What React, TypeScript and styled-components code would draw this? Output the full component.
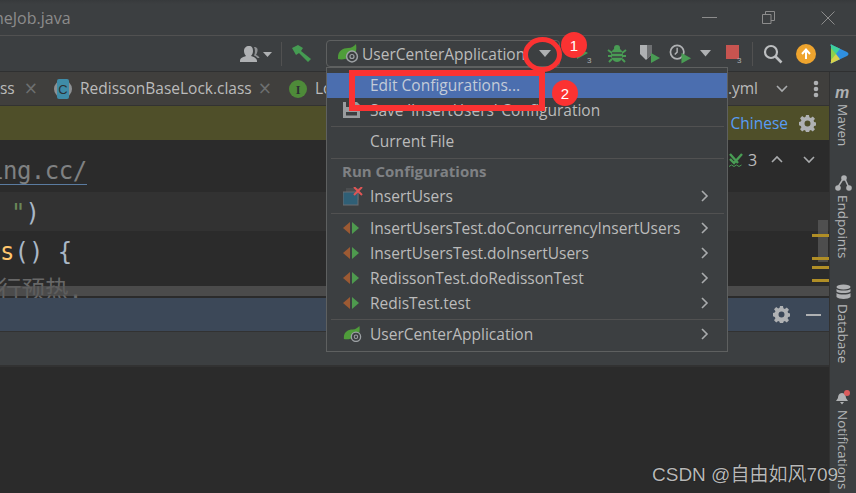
import React from 'react';
import styled, { createGlobalStyle } from 'styled-components';

const Global = createGlobalStyle`
  html, body { margin: 0; padding: 0; background: #2b2b2b; }
  body { font-family: "Open Sans", "Noto Sans CJK SC", sans-serif; }
`;

const Screen = styled.div`
  position: relative; width: 856px; height: 493px; overflow: hidden;
  display: flex; flex-direction: column; background: #3c3f41; color: #bbbbbb;
  font-size: 15.5px;
`;
const TitleBar = styled.header`
  position: relative; flex: 0 0 35px; display: flex; align-items: center;
  border-bottom: 1px solid #515151; box-sizing: content-box;
  background: linear-gradient(#34363899 0, #3c3f41 4px);
`;
const TitleText = styled.span`
  margin-left: -6px; color: #8c8c8c; font-size: 16px; flex: 1;
`;
const WindowButton = styled.svg`
  display: block; margin-right: ${p => p.$mr}px; flex: none;
`;
const Toolbar = styled.div`
  flex: 0 0 35px; display: flex; align-items: center; padding-left: 240px;
  border-bottom: 1px solid #2f3031; box-sizing: content-box;
`;
const Slot = styled.div`
  flex: none; display: flex; align-items: center; justify-content: center;
  width: ${p => p.$w}px; margin-left: ${p => p.$ml || 0}px;
`;
const ToolSep = styled.div`
  flex: none; width: 1px; height: 24px; background: #515151;
  margin-left: ${p => p.$ml}px;
`;
const Combo = styled.div`
  flex: none; box-sizing: border-box; width: 234px; height: 27px; margin-left: 14px;
  border: 1px solid #5e6060; border-radius: 4px; display: flex; align-items: center;
  padding-left: 10px; gap: 3px; font-size: 15.5px; white-space: nowrap;
`;
const ComboCaret = styled.span`
  margin-left: 11px; width: 0; height: 0;
  border-left: 6px solid transparent; border-right: 6px solid transparent; border-top: 7px solid #afb1b3;
`;
const Workspace = styled.div`flex: 1; display: flex; min-height: 0;`;
const MainColumn = styled.div`flex: 1; min-width: 0; display: flex; flex-direction: column;`;
const Tabs = styled.div`
  flex: 0 0 33px; display: flex; align-items: center; background: #403f3d;
  border-bottom: 1px solid #323232; box-sizing: content-box; white-space: nowrap; overflow: hidden;
`;
const Tab = styled.div`
  flex: none; display: flex; align-items: center; margin-left: ${p => p.$ml}px;
`;
const TabName = styled.span`margin-left: ${p => p.$ml || 0}px; font-size: 15.5px; padding-bottom: 1px;`;
const TabClose = styled.span`
  margin-left: ${p => p.$ml}px; color: #6d6f70; font-size: 17px; line-height: 1; font-family: "DejaVu Sans", sans-serif;
`;
const TabEnd = styled.div`
  margin-left: auto; display: flex; align-items: center; padding-right: 10px;
`;
const TabEndGap = styled.span`flex: none; width: ${p => p.$w}px;`;
const Banner = styled.div`
  flex: 0 0 34px; background: #4f4f29; display: flex; align-items: center; justify-content: flex-end;
  padding-right: 13px; gap: 11px; color: #589df6; font-size: 15.5px;
`;
const Editor = styled.section`
  position: relative; flex: 0 0 158px; background: #2b2b2b; overflow: hidden;
  font-family: "DejaVu Sans Mono", "Noto Sans CJK SC", monospace; font-size: 24px; color: #a9b7c6;
`;
const CodeRow = styled.div`
  height: ${p => p.$h}px; display: flex; align-items: flex-end; white-space: pre;
  padding-left: ${p => p.$pl || 0}px; box-sizing: border-box; line-height: 36px;
  background: ${p => (p.$active ? '#323232' : 'transparent')};
`;
const LinkText = styled.span`
  color: #7f8182; border-bottom: 1px solid #5a7ba0; line-height: 26px; margin-left: -11px; margin-bottom: 7px; letter-spacing: -.5px;
`;
const Str = styled.span`color: #6a8759;`;
const Method = styled.span`color: #ffc66d;`;
const Comment = styled.span`color: #686868; margin-left: -2px; font-size: 23.5px;`;
const Inspect = styled.div`
  position: absolute; top: 9px; left: 729px; width: 96px; display: flex; align-items: center; font-size: 15px;
  font-family: "Open Sans", sans-serif; color: #bbb;
`;
const Count = styled.span`margin-left: 4px; font-size: 16px;`;
const InspectChevrons = styled.span`display: flex; gap: 20px; margin-left: 14px;`;
const HScroll = styled.div`
  position: absolute; left: 0; right: 0; top: 146px; height: 10px; background: rgba(90,90,90,.7);
`;
const VThumb = styled.div`
  position: absolute; left: 818px; top: 80px; width: 10px; height: 42px; background: rgba(90,90,90,.75);
`;
const Mark = styled.div`
  position: absolute; left: 812px; width: 17px; height: 3px; background: #b08e26; top: ${p => p.$y}px;
`;
const PanelHeader = styled.div`
  flex: 0 0 33px; background: #3c4858; display: flex; align-items: center; justify-content: flex-end;
  gap: 16px; padding-right: 8px;
`;
const PanelBar = styled.div`
  flex: 0 0 36px; background: #3c3f41; border-top: 1px solid #323232; border-bottom: 2px solid #323232; box-sizing: border-box;
`;
const Terminal = styled.div`flex: 1; background: #2b2b2b;`;
const Sidebar = styled.aside`
  flex: 0 0 27px; border-left: 1px solid #323232; box-sizing: border-box;
  display: flex; flex-direction: column; align-items: center; padding-top: 14px; overflow: hidden;
`;
const SideItem = styled.div`
  flex: none; display: flex; flex-direction: column; align-items: center; gap: 4px; margin-bottom: ${p => p.$mb}px;
`;
const SideLabel = styled.span`
  writing-mode: vertical-rl; font-size: 13.5px; line-height: 16px; color: #b4b6b8; white-space: nowrap;
`;
const Popup = styled.div`
  position: absolute; left: 326px; top: 67px; width: 402px; box-sizing: border-box; padding: 5px 0 4px;
  background: #3c3f41; border: 1px solid #5e6060; z-index: 2;
`;
const MenuRow = styled.div`
  height: 25px; box-sizing: border-box; padding: 0 16px 1px; display: flex; align-items: center;
  background: ${p => (p.$active ? '#4b6eaf' : 'transparent')}; white-space: nowrap; font-size: 15.5px;
  color: ${p => (p.$active ? '#c3cbd8' : '#bbbbbb')};
`;
const MenuIcon = styled.span`flex: 0 0 27px; display: flex; align-items: center;`;
const MenuLabel = styled.span`flex: 1;`;
const MenuHeading = styled.div`
  height: 25px; box-sizing: border-box; padding: 0 0 1px 15px; display: flex; align-items: center; font-weight: 700; font-size: 15px; color: #7f8184;
`;
const MenuSep = styled.div`
  height: 1px; margin: ${p => p.$mt}px 3px ${p => p.$mb}px 4px; background: #515151;
`;
const RedBox = styled.div`
  position: absolute; left: 349px; top: 70px; width: 196px; height: 41px; box-sizing: border-box;
  border: 6.5px solid #fb3232; z-index: 3;
`;
const RedRing = styled.div`
  position: absolute; left: 523px; top: 37px; width: 39px; height: 35px; box-sizing: border-box;
  border: 5px solid #fb3232; border-radius: 50%; z-index: 3;
`;
const Badge = styled.div`
  position: absolute; left: ${p => p.$x - 13}px; top: ${p => p.$y - 13}px; width: 26px; height: 26px; border-radius: 50%;
  background: #fb3232; color: #fff; font-size: 15px; display: flex; align-items: center; justify-content: center; z-index: 3;
  font-family: "Liberation Sans", sans-serif;
`;
const Watermark = styled.div`
  position: absolute; left: 652px; top: 459px; z-index: 4; white-space: nowrap;
  font-family: "Liberation Sans", "Noto Sans CJK SC", sans-serif; font-size: 19px; color: #b8b8b8;
  text-shadow: 0 0 1px #000;
`;

const Chevron = ({ dir = 'right', size = 10, color = '#a9abad' }: { dir?: string; size?: number; color?: string }) => {
  const d = dir === 'right' ? 'M3 1 L8 6 L3 11' : dir === 'down' ? 'M1 3 L6 8 L11 3' : 'M1 8 L6 3 L11 8';
  return (
    <svg width={size + 2} height={size + 2} viewBox="0 0 12 12" fill="none">
      <path d={d} stroke={color} strokeWidth="1.6" />
    </svg>
  );
};
const Caret = () => (
  <svg width="11" height="7" viewBox="0 0 11 7"><path d="M0 0H11L5.5 6.5Z" fill="#afb1b3" /></svg>
);
const Spring = ({ size = 22 }: { size?: number }) => (
  <svg width={size} height={size * 0.82} viewBox="0 0 22 18">
    <path d="M1 13C1 7 6 4 11 4 15 4 17 2 19 0 20 6 19 11 14 13 9 15 5 16 1 15Z" fill="#4f9d3a" />
    <circle cx="15" cy="12.5" r="5.4" fill="#3c3f41" stroke="#9da1a4" strokeWidth="1.5" />
    <circle cx="15" cy="12.5" r="2" fill="none" stroke="#9da1a4" strokeWidth="1.2" />
  </svg>
);
const TestIcon = () => (
  <svg width="16" height="14" viewBox="0 0 16 14">
    <path d="M7 1V13L0 7Z" fill="#9c5a33" />
    <path d="M9 1V13L16 7Z" fill="#4e9a4e" />
  </svg>
);
const Save = () => (
  <svg width="17" height="16" viewBox="0 0 17 16">
    <path d="M0 0H14L17 3V16H0Z" fill="#9a9c9e" />
    <rect x="3" y="0" width="9" height="5" fill="#3c3f41" />
    <rect x="3" y="10" width="11" height="3.500" fill="#3c3f41" />
  </svg>
);
const InsertIcon = () => (
  <svg width="20" height="19" viewBox="0 0 20 19">
    <rect x="3" y="1" width="13" height="12" fill="#4a4d4f" />
    <rect x="0" y="5" width="15" height="13" fill="#2f5f76" stroke="#6a6d70" />
    <path d="M11 0L19 8M19 0L11 8" stroke="#e05555" strokeWidth="2" />
  </svg>
);
const Gear = ({ size = 17 }: { size?: number }) => (
  <svg width={size} height={size} viewBox="0 0 16 16">
    <path
      d="M6.6 0h2.8l.4 2.2 1.3.6 1.9-1.3 2 2-1.3 1.9.6 1.3 2.2.4v2.8l-2.2.4-.6 1.3 1.3 1.9-2 2-1.9-1.3-1.3.6-.4 2.2H6.6l-.4-2.2-1.3-.6L3 15.5l-2-2 1.3-1.9-.6-1.3L-.5 9.4V6.6l2.2-.4.6-1.3L1 3l2-2 1.9 1.3 1.3-.6zM8 5.2a2.8 2.8 0 100 5.6 2.8 2.8 0 000-5.6z"
      fill="#afb1b3" fillRule="evenodd"
    />
  </svg>
);

const menuTests = [
  'InsertUsersTest.doConcurrencyInsertUsers',
  'InsertUsersTest.doInsertUsers',
  'RedissonTest.doRedissonTest',
  'RedisTest.test',
];

export default function App() {
  return (
    <Screen>
      <Global />
      <TitleBar>
        <TitleText>heJob.java</TitleText>
        <WindowButton $mr={45} width="15" height="2" viewBox="0 0 15 2"><rect width="15" height="1" fill="#8c8c8c" /></WindowButton>
        <WindowButton $mr={46} width="13" height="13" viewBox="0 0 13 13" fill="none"><path d="M.5 3.5h8.5v9H.5zM3.5 3.5v-3h9v9H9" stroke="#8c8c8c" /></WindowButton>
        <WindowButton $mr={21} width="14" height="14" viewBox="0 0 14 14" fill="none"><path d="M.5.5l13 13M13.5.5l-13 13" stroke="#8c8c8c" /></WindowButton>
      </TitleBar>
      <Toolbar>
        <Slot $w={32}>
          <svg width="32" height="16" viewBox="0 0 32 16">
            <path d="M9 0c3 0 4 2 4 5 0 2-1 4-2 5 3 1 6 2 6 5v1H0v-1c0-3 3-4 6-5-1-1-2-3-2-5 0-3 2-5 5-5z" fill="#afb1b3" />
            <path d="M14 1c3 0 4 2 3.500 4-.3 2-1 3-1.500 4 2 .5 3 1.500 3.500 3h-2c-1-1-2-2-3.500-2.500 1-2 1.500-6 0-8.500z" fill="#8e9092" />
            <path d="M23 6H32L27.500 11Z" fill="#afb1b3" />
          </svg>
        </Slot>
        <ToolSep $ml={9} />
        <Slot $w={20} $ml={10}>
          <svg width="20" height="18" viewBox="0 0 20 18">
            <path d="M0 3L6 0 11 3 9 6 19 14 16 17 7 8 4 10Z" fill="#459b52" />
          </svg>
        </Slot>
        <Combo>
          <Spring />
          <span>UserCenterApplication</span>
          <ComboCaret />
        </Combo>
        <Slot $w={24} $ml={8}>
          <svg width="24" height="20" viewBox="0 0 24 20">
            <path d="M9 3V15L20 9Z" fill="#499c54" />
            <text x="19" y="19" fontSize="8" fill="#afb1b3" fontFamily="Liberation Sans">3</text>
          </svg>
        </Slot>
        <Slot $w={24} $ml={13}>
          <svg width="20" height="20" viewBox="0 0 20 20">
            <ellipse cx="10" cy="11" rx="6" ry="7" fill="#499c54" />
            <circle cx="10" cy="4" r="3" fill="#499c54" />
            <path d="M1 6L5 9M19 6L15 9M1 12H5M19 12H15M2 18L5 15M18 18L15 15" stroke="#499c54" strokeWidth="2" />
            <path d="M5 9H15M5 13H15" stroke="#3c3f41" strokeWidth="1.300" />
          </svg>
        </Slot>
        <Slot $w={24} $ml={9}>
          <svg width="24" height="22" viewBox="0 0 24 22">
            <path d="M2 2H14V11L8 17 2 11Z" fill="#afb1b3" />
            <path d="M9 2H14V11L9 16Z" fill="#6e7072" />
            <path d="M13 10V20L22 15Z" fill="#499c54" />
          </svg>
        </Slot>
        <Slot $w={23} $ml={7}>
          <svg width="24" height="22" viewBox="0 0 24 22" fill="none">
            <circle cx="8.500" cy="9" r="7" stroke="#afb1b3" strokeWidth="1.800" />
            <path d="M8.500 4.500V9L6 11.500" stroke="#afb1b3" strokeWidth="1.500" />
            <path d="M13 10V21L23 15.500Z" fill="#499c54" />
          </svg>
        </Slot>
        <Slot $w={11} $ml={8}><Caret /></Slot>
        <Slot $w={23} $ml={11}>
          <svg width="23" height="20" viewBox="0 0 23 20">
            <rect x="4" y="1" width="13" height="14" fill="#c75450" />
            <text x="15" y="19" fontSize="8" fill="#afb1b3" fontFamily="Liberation Sans">3</text>
          </svg>
        </Slot>
        <ToolSep $ml={7} />
        <Slot $w={22} $ml={9}>
          <svg width="20" height="20" viewBox="0 0 20 20" fill="none">
            <circle cx="8" cy="8" r="6" stroke="#bdbfc1" strokeWidth="2.200" />
            <path d="M12.500 12.500L18.500 18.500" stroke="#bdbfc1" strokeWidth="2.600" />
          </svg>
        </Slot>
        <Slot $w={20} $ml={12}>
          <svg width="20" height="20" viewBox="0 0 20 20">
            <circle cx="10" cy="10" r="10" fill="#eea42e" />
            <path d="M10 15V6M6 10L10 5.500 14 10" stroke="#fff" strokeWidth="2" fill="none" />
          </svg>
        </Slot>
        <Slot $w={20} $ml={13}>
          <svg width="20" height="20" viewBox="0 0 20 20">
            <path d="M2 2C1 1 2 0 3 1L18 8C20 9 20 11 18 12L3 19C2 20 1 19 2 18Z" fill="#2f8fe0" />
            <path d="M2 2C1 1 2 0 3 1L11 4.700 7 10 2 10Z" fill="#3ed19b" />
            <path d="M2 18C1 19 2 20 3 19L11 15.300 7 10 2 10Z" fill="#d8d24a" />
            <path d="M2 4L7 10 2 16Z" fill="#8ad04e" />
          </svg>
        </Slot>
      </Toolbar>
      <Workspace>
        <MainColumn>
          <Tabs>
            <Tab $ml={-20}>
              <TabName>class</TabName>
              <TabClose $ml={9}>×</TabClose>
            </Tab>
            <Tab $ml={15}>
              <svg width="20" height="20" viewBox="0 0 20 20">
                <circle cx="10" cy="10" r="9" fill="#8d9194" />
                <rect x="4" y="0" width="12" height="20" rx="2" fill="#3f8ca8" />
                <text x="10" y="14.500" textAnchor="middle" fontSize="13" fill="#2c3133" fontFamily="Liberation Sans">C</text>
              </svg>
              <TabName $ml={7}>RedissonBaseLock.class</TabName>
              <TabClose $ml={6}>×</TabClose>
            </Tab>
            <Tab $ml={16}>
              <svg width="20" height="20" viewBox="0 0 20 20">
                <circle cx="10" cy="10" r="9" fill="#4e8b39" />
                <text x="10" y="14.500" textAnchor="middle" fontSize="12" fontWeight="700" fill="#2c3133" fontFamily="Liberation Serif">I</text>
              </svg>
              <TabName $ml={7}>Lo</TabName>
            </Tab>
            <TabEnd>
              <TabName>.yml</TabName>
              <TabEndGap $w={18} />
              <Chevron dir="down" />
              <TabEndGap $w={25} />
              <svg width="6" height="18" viewBox="0 0 6 18">
                <circle cx="3" cy="3" r="2.300" fill="#afb1b3" /><circle cx="3" cy="9" r="2.300" fill="#afb1b3" /><circle cx="3" cy="15" r="2.300" fill="#afb1b3" />
              </svg>
            </TabEnd>
          </Tabs>
          <Banner>
            <span>Chinese</span>
            <Gear />
          </Banner>
          <Editor>
            <CodeRow $h={52}><LinkText>ing.cc/</LinkText></CodeRow>
            <CodeRow $h={39} $active $pl={11}><Str>"</Str>)</CodeRow>
            <CodeRow $h={39}><Method>s</Method>() {'{'}</CodeRow>
            <CodeRow $h={38}><Comment>行预热.</Comment></CodeRow>
            <Inspect>
              <svg width="15" height="15" viewBox="0 0 15 15" fill="none">
                <path d="M1 6L5 10 13 1M1 1L9 10" stroke="#499c54" strokeWidth="2.400" />
                <path d="M0 13.500l2.500-1.500 2.500 1.500 2.500-1.500 2.500 1.500 2.500-1.500" stroke="#499c54" />
              </svg>
              <Count>3</Count>
              <InspectChevrons>
                <Chevron dir="up" /><Chevron dir="down" />
              </InspectChevrons>
            </Inspect>
            <VThumb />
            <Mark $y={94} /><Mark $y={117} /><Mark $y={126} /><Mark $y={139} />
            <HScroll />
          </Editor>
          <PanelHeader>
            <Gear />
            <svg width="15" height="2" viewBox="0 0 15 2"><rect width="15" height="2" fill="#afb1b3" /></svg>
          </PanelHeader>
          <PanelBar />
          <Terminal />
        </MainColumn>
        <Sidebar>
          <SideItem $mb={29}>
            <svg width="17" height="14" viewBox="0 0 17 14"><text x="0" y="12" fontSize="16" fontWeight="700" fontStyle="italic" fill="#afb1b3" fontFamily="Liberation Sans">m</text></svg>
            <SideLabel>Maven</SideLabel>
          </SideItem>
          <SideItem $mb={25}>
            <svg width="17" height="16" viewBox="0 0 17 16" fill="#afb1b3">
              <circle cx="9" cy="3" r="2.800" /><circle cx="3" cy="13" r="2.800" /><circle cx="14" cy="13" r="2.800" />
              <path d="M8 4L3 12M10 4l4 9" stroke="#afb1b3" strokeWidth="1.500" />
            </svg>
            <SideLabel>Endpoints</SideLabel>
          </SideItem>
          <SideItem $mb={27}>
            <svg width="15" height="16" viewBox="0 0 15 16" fill="#afb1b3">
              <ellipse cx="7.500" cy="3" rx="7" ry="2.600" />
              <path d="M.5 5c2 2 12 2 14 0v2.500c-2 2-12 2-14 0zM.5 9c2 2 12 2 14 0v4c-2 2.500-12 2.500-14 0z" />
            </svg>
            <SideLabel>Database</SideLabel>
          </SideItem>
          <SideItem $mb={0}>
            <svg width="16" height="16" viewBox="0 0 16 16">
              <path d="M7 3c3 0 4 3 4 5l2 3H1l2-3c0-2 1-5 4-5zM5 12h4l-2 2.500z" fill="#afb1b3" />
              <circle cx="12" cy="3" r="3" fill="#db5c5c" />
            </svg>
            <SideLabel>Notifications</SideLabel>
          </SideItem>
        </Sidebar>
      </Workspace>
      <Popup>
        <MenuRow $active><MenuIcon /><MenuLabel>Edit Configurations...</MenuLabel></MenuRow>
        <MenuRow><MenuIcon><Save /></MenuIcon><MenuLabel>Save 'InsertUsers' Configuration</MenuLabel></MenuRow>
        <MenuSep $mt={3} $mb={2} />
        <MenuRow><MenuIcon /><MenuLabel>Current File</MenuLabel></MenuRow>
        <MenuSep $mt={4} $mb={0} />
        <MenuHeading>Run Configurations</MenuHeading>
        <MenuRow><MenuIcon><InsertIcon /></MenuIcon><MenuLabel>InsertUsers</MenuLabel><Chevron /></MenuRow>
        <MenuSep $mt={4} $mb={2} />
        {menuTests.map(t => (
          <MenuRow key={t}><MenuIcon><TestIcon /></MenuIcon><MenuLabel>{t}</MenuLabel><Chevron /></MenuRow>
        ))}
        <MenuSep $mt={3} $mb={2} />
        <MenuRow><MenuIcon><Spring size={19} /></MenuIcon><MenuLabel>UserCenterApplication</MenuLabel><Chevron /></MenuRow>
      </Popup>
      <RedBox />
      <RedRing />
      <Badge $x={574} $y={45}>1</Badge>
      <Badge $x={565} $y={93}>2</Badge>
      <Watermark>CSDN @自由如风709</Watermark>
    </Screen>
  );
}
